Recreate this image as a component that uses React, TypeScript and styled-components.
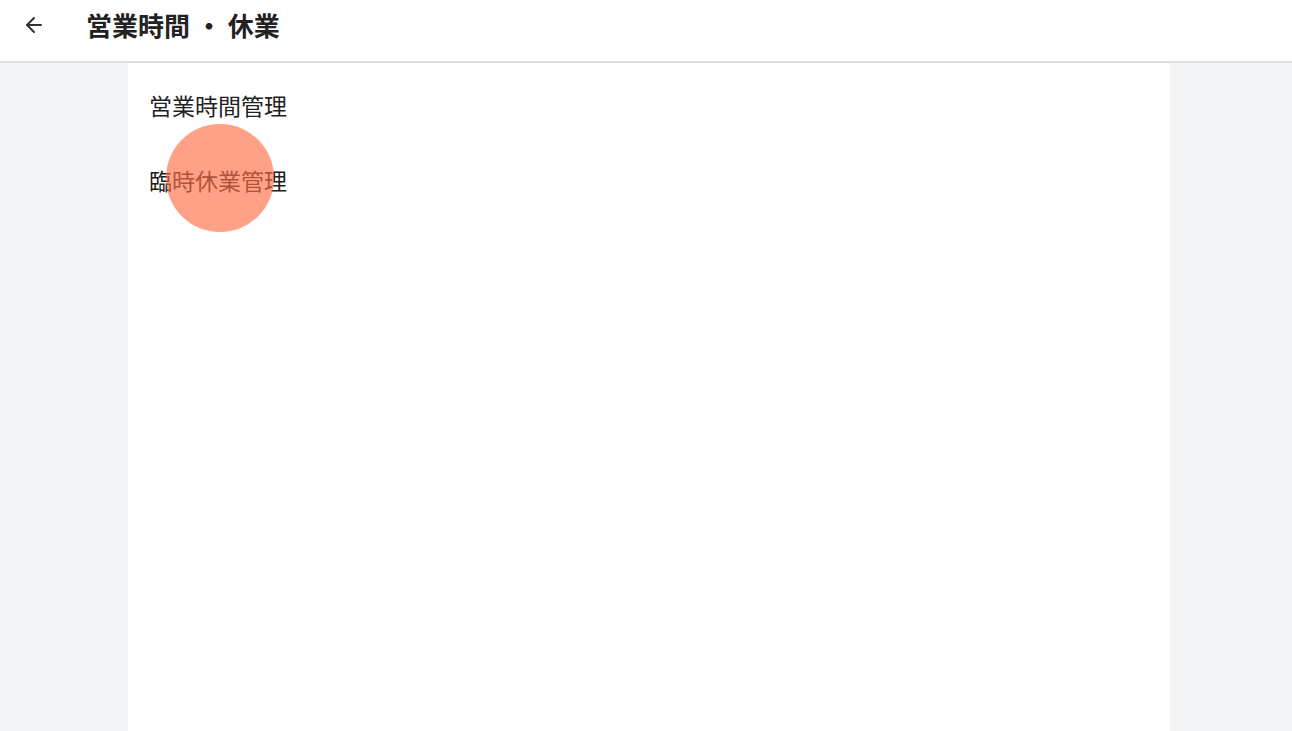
import React from "react";
import styled, { createGlobalStyle } from "styled-components";

const Global = createGlobalStyle`
  html, body { margin: 0; padding: 0; height: 100%; }
  body { background: #f3f4f6; font-family: "Noto Sans CJK JP", "Noto Sans", sans-serif; color: #222; }
  #root { height: 100%; }
`;

const Page = styled.div`
  display: flex;
  flex-direction: column;
  height: 731px;
  overflow: hidden;
`;

const Header = styled.header`
  height: 63px;
  box-sizing: border-box;
  padding-bottom: 12px;
  flex: 0 0 auto;
  display: flex;
  align-items: center;
  background: #fff;
  border-bottom: 2px solid #dde1e5;
  padding-left: 20px;
  gap: 38px;
`;

const BackButton = styled.button`
  border: none;
  background: none;
  padding: 0;
  width: 28px;
  height: 28px;
  display: flex;
  align-items: center;
  justify-content: center;
  color: #333;
`;

const Title = styled.h1`
  margin: 0;
  font-size: 26px;
  font-weight: 700;
  color: #222;
  letter-spacing: 0;
  white-space: pre;
`;

const Body = styled.main`
  flex: 1;
  display: flex;
  justify-content: flex-start;
  padding-left: 128px;
  padding-right: 122px;
`;

const Panel = styled.section`
  flex: 1;
  background: #fff;
  padding: 26px 22px 0 21px;
  display: flex;
  flex-direction: column;
  gap: 42px;
`;

const Item = styled.div`
  position: relative;
  font-size: 23px;
  line-height: 33px;
  color: #222;
`;

const Touch = styled.span`
  position: absolute;
  left: 17px;
  top: -40px;
  width: 108px;
  height: 108px;
  border-radius: 50%;
  background: rgba(255, 110, 70, 0.65);
  pointer-events: none;
`;

export default function App() {
  return (
    <>
      <Global />
      <Page>
        <Header>
          <BackButton aria-label="back">
            <svg width="24" height="24" viewBox="0 0 24 24" fill="none" stroke="currentColor" strokeWidth="2" strokeLinecap="round" strokeLinejoin="round">
              <path d="M19 12H5" />
              <path d="M12 19l-7-7 7-7" />
            </svg>
          </BackButton>
          <Title>営業時間 ・ 休業</Title>
        </Header>
        <Body>
          <Panel>
            <Item>営業時間管理</Item>
            <Item>
              臨時休業管理
              <Touch />
            </Item>
          </Panel>
        </Body>
      </Page>
    </>
  );
}
